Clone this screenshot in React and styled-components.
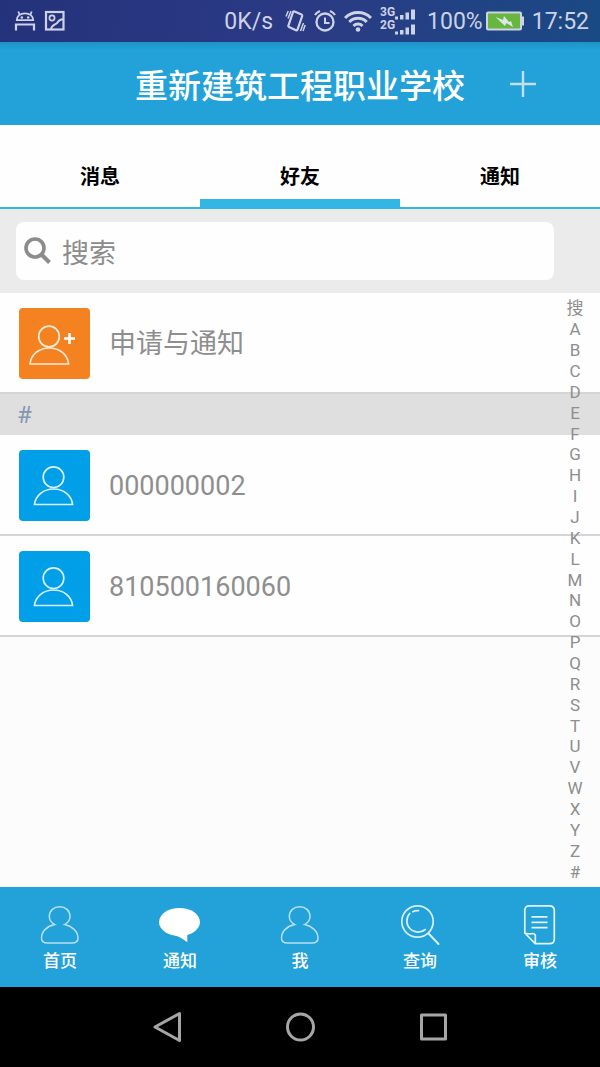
import { useState } from "react";
import styled, { createGlobalStyle } from "styled-components";

const GlobalStyle = createGlobalStyle`
  * {
    box-sizing: border-box;
  }

  body {
    margin: 0;
    background: #fcfcfc;
    font-family: Roboto, "Noto Sans CJK SC", sans-serif;
  }

  button,
  input {
    margin: 0;
    padding: 0;
    border: none;
    background: none;
    color: inherit;
    font: inherit;
  }

  svg {
    display: block;
    flex: none;
  }
`;

const Screen = styled.div`
  display: flex;
  flex-direction: column;
  min-height: 100vh;
`;

const StatusBar = styled.div`
  display: flex;
  align-items: center;
  justify-content: space-between;
  height: 42px;
  padding: 0 11px 0 14px;
  background: linear-gradient(100deg, #24327c, #2b3a84 50%, #194a84);
  color: #cdd2e6;
  font-size: 23px;
`;

const StatusGroup = styled.div`
  display: flex;
  align-items: center;
  gap: ${(props) => props.$gap}px;
`;

const Signal = styled.div`
  display: flex;
  align-items: center;
  font-size: 12px;
  font-weight: 700;
  line-height: 13px;
`;

const SignalLabels = styled.div`
  padding-bottom: 4px;
`;

const Header = styled.header`
  display: grid;
  grid-template-columns: 1fr auto 1fr;
  align-items: center;
  height: 83px;
  background: linear-gradient(#1d93c6, #22a2d8 8px);
  color: #fff;
`;

const Title = styled.h1`
  grid-column: 2;
  margin: 0;
  padding-top: 6px;
  font-size: 33px;
  font-weight: 500;
  line-height: 40px;
`;

const AddButton = styled.button`
  display: grid;
  place-items: center;
  width: 40px;
  height: 40px;
  margin-left: 38px;
  color: #c3dfec;
`;

const Tabs = styled.div`
  display: flex;
  height: 84px;
  background: #fefefe;
  border-bottom: 2px solid #33b5e5;
`;

const Tab = styled.button`
  flex: 1;
  padding-top: 30px;
  border-bottom: 8px solid
    ${(props) => (props.$active ? "#33b5e5" : "transparent")};
  color: #000;
  font-size: 20px;
  font-weight: 700;
  line-height: 24px;
`;

const SearchBar = styled.div`
  padding: 13px 46px 13px 16px;
  background: #ebebeb;
`;

const SearchBox = styled.label`
  display: flex;
  align-items: center;
  gap: 10px;
  height: 58px;
  padding: 0 8px;
  border-radius: 8px;
  background: #fefefe;
  color: #8c8c8c;
`;

const SearchInput = styled.input`
  flex: 1;
  min-width: 0;
  padding-top: 6px;
  font-size: 27px;
  line-height: 40px;
  outline: none;

  &::placeholder {
    color: #8c8c8c;
    opacity: 1;
  }
`;

const Content = styled.main`
  position: relative;
  flex: 1;
  min-height: 594px;
`;

const List = styled.ul`
  margin: 0;
  padding: 0;
  list-style: none;
`;

const Row = styled.li`
  display: flex;
  align-items: center;
  gap: 19px;
  padding: 15px 19px 13px;
  border-bottom: 2px solid #d5d5d5;
  background: #fefefe;
  color: #8e8e8e;
  font-size: 27px;
  line-height: 40px;
`;

const Avatar = styled.div`
  width: 71px;
  height: 71px;
  border-radius: 4px;
  background: ${(props) => props.$color};
`;

const GroupHeading = styled.h2`
  margin: 0;
  padding: 2px 17px 0;
  background: #dfdfdf;
  color: #8497b0;
  font-size: 24px;
  font-weight: 400;
  line-height: 39px;
`;

const LetterIndex = styled.nav`
  position: absolute;
  top: 0;
  right: 0;
  bottom: 0;
  display: flex;
  flex-direction: column;
  width: 50px;
  padding: 5px 0;
`;

const Letter = styled.button`
  flex: 1;
  min-height: 0;
  color: #8e8e8e;
  font-size: 17px;
  line-height: 20px;
`;

const BottomNav = styled.nav`
  display: flex;
  height: 100px;
  background: #22a2d8;
`;

const NavItem = styled.button`
  display: flex;
  flex: 1;
  flex-direction: column;
  align-items: center;
  gap: 4px;
  padding-top: 16px;
  color: #fff;
  font-size: 17px;
  font-weight: 500;
  line-height: 20px;
`;

const SystemNav = styled.div`
  display: flex;
  height: 80px;
  padding: 0 100px;
  background: #000;
  color: #a6a6a6;
`;

const SystemButton = styled.button`
  display: grid;
  flex: 1;
  place-items: center;
`;

const tabs = ["消息", "好友", "通知"];
const friends = ["000000002", "810500160060"];
const letters = ["搜", ..."ABCDEFGHIJKLMNOPQRSTUVWXYZ#"];

const navItems = [
  { id: "home", label: "首页", icon: <PersonIcon /> },
  { id: "notice", label: "通知", icon: <BubbleIcon /> },
  { id: "me", label: "我", icon: <PersonIcon /> },
  { id: "query", label: "查询", icon: <QueryIcon /> },
  { id: "review", label: "审核", icon: <ReviewIcon /> },
];

function App() {
  const [activeTab, setActiveTab] = useState("好友");
  const [query, setQuery] = useState("");

  return (
    <Screen>
      <GlobalStyle />
      <StatusBar>
        <StatusGroup $gap={8}>
          <AndroidIcon />
          <PictureIcon />
        </StatusGroup>
        <StatusGroup $gap={12}>
          <span>0K/s</span>
          <StatusGroup $gap={8}>
            <VibrateIcon />
            <AlarmIcon />
            <WifiIcon />
            <Signal>
              <SignalLabels>
                <div>3G</div>
                <div>2G</div>
              </SignalLabels>
              <SignalBars />
            </Signal>
          </StatusGroup>
          <StatusGroup $gap={8}>
            <StatusGroup $gap={3}>
              <span>100%</span>
              <BatteryIcon />
            </StatusGroup>
            <span>17:52</span>
          </StatusGroup>
        </StatusGroup>
      </StatusBar>

      <Header>
        <Title>重新建筑工程职业学校</Title>
        <AddButton aria-label="添加">
          <svg width="28" height="28" stroke="currentColor" strokeWidth="2.4">
            <path d="M14 1v26M1 14h26" />
          </svg>
        </AddButton>
      </Header>

      <Tabs role="tablist">
        {tabs.map((tab) => (
          <Tab
            key={tab}
            role="tab"
            aria-selected={tab === activeTab}
            $active={tab === activeTab}
            onClick={() => setActiveTab(tab)}
          >
            {tab}
          </Tab>
        ))}
      </Tabs>

      <SearchBar>
        <SearchBox>
          <SearchIcon />
          <SearchInput
            type="text"
            aria-label="搜索"
            placeholder="搜索"
            value={query}
            onChange={(e) => setQuery(e.target.value)}
          />
        </SearchBox>
      </SearchBar>

      <Content>
        <List>
          <Row>
            <Avatar $color="#f58220">
              <AddFriendIcon />
            </Avatar>
            <span>申请与通知</span>
          </Row>
        </List>
        <GroupHeading>#</GroupHeading>
        <List>
          {friends.map((friend) => (
            <Row key={friend}>
              <Avatar $color="#009fe8">
                <FriendIcon />
              </Avatar>
              <span>{friend}</span>
            </Row>
          ))}
        </List>
        <LetterIndex aria-label="索引">
          {letters.map((letter) => (
            <Letter key={letter}>{letter}</Letter>
          ))}
        </LetterIndex>
      </Content>

      <BottomNav>
        {navItems.map((item) => (
          <NavItem key={item.id}>
            {item.icon}
            <span>{item.label}</span>
          </NavItem>
        ))}
      </BottomNav>

      <SystemNav>
        <SystemButton aria-label="返回">
          <SystemIcon>
            <path d="M29.5 3.5v27L5 17z" />
          </SystemIcon>
        </SystemButton>
        <SystemButton aria-label="主屏幕">
          <SystemIcon>
            <circle cx="17.5" cy="17" r="13" />
          </SystemIcon>
        </SystemButton>
        <SystemButton aria-label="最近任务">
          <SystemIcon>
            <rect x="5.5" y="5" width="24" height="24" />
          </SystemIcon>
        </SystemButton>
      </SystemNav>
    </Screen>
  );
}

export default App;

function SystemIcon({ children }) {
  return (
    <svg
      width="34"
      height="34"
      fill="none"
      stroke="currentColor"
      strokeWidth="3"
      strokeLinejoin="round"
    >
      {children}
    </svg>
  );
}

function AndroidIcon() {
  return (
    <svg width="22" height="22" fill="none" stroke="currentColor">
      <path
        d="M2.8 10.2C2.8 6 6.3 3.3 11 3.3s8.200 2.700 8.200 6.900z"
        strokeWidth="1.800"
      />
      <path d="M5.500 4.500 4.300 1.500M16.500 4.500 17.700 1.500" strokeWidth="1.800" />
      <path d="M2 20.500v-6h18v6" strokeWidth="2.200" />
      <circle cx="7.800" cy="7.500" r="1.300" fill="currentColor" stroke="none" />
      <circle cx="14.200" cy="7.500" r="1.300" fill="currentColor" stroke="none" />
    </svg>
  );
}

function PictureIcon() {
  return (
    <svg width="22" height="22" fill="none" stroke="currentColor">
      <rect x="2" y="2" width="17.5" height="17.5" strokeWidth="2.2" />
      <circle cx="8" cy="8" r="2.600" strokeWidth="1.700" />
      <path d="M7 19C8 14 12 15 13.500 12.500S16 9.500 19 9.300" strokeWidth="2" />
    </svg>
  );
}

function VibrateIcon() {
  return (
    <svg width="21" height="24" fill="none" stroke="currentColor">
      <path
        d="M9.500 2.500 16.500 5.500q1 .5.700 1.500L12.500 20.500q-.5 1.200-1.500.7L4 18q-1-.5-.6-1.500L8 3.200q.4-1 1.500-.7z"
        strokeWidth="2.200"
      />
      <path
        d="M3 9.500 6 2M1 7.500 3.200 2M15.500 22l3-8M18 22l2.200-6"
        strokeWidth="1.500"
      />
    </svg>
  );
}

function AlarmIcon() {
  return (
    <svg width="22" height="24" fill="none" stroke="currentColor">
      <circle cx="11" cy="13" r="8.500" strokeWidth="2.300" />
      <path d="M11 8.500V14h4.500" strokeWidth="2" />
      <path d="M1 6Q2.500 3.500 6 2M21 6Q19.500 3.500 16 2" strokeWidth="2.200" />
    </svg>
  );
}

function WifiIcon() {
  return (
    <svg width="28" height="22" fill="none" stroke="currentColor">
      <path
        d="M1 8a18 18 0 0 1 26 0M5.300 12a12 12 0 0 1 17.400 0M9.500 16a6.200 6.200 0 0 1 9 0"
        strokeWidth="3"
      />
      <circle cx="14" cy="19.500" r="2.300" fill="currentColor" stroke="none" />
    </svg>
  );
}

function SignalBars() {
  return (
    <svg width="20" height="27" fill="currentColor">
      <path d="M0 8.500h3v3H0zM5 7h3.500v4.500H5zM10.500 4.500H14v7h-3.500zM16 1.500h4v10h-4z" />
      <path d="M0 23.500h3v3H0zM5 22h3.500v4.500H5zM10.500 19.500H14v7h-3.500zM16 16.500h4v10h-4z" />
    </svg>
  );
}

function BatteryIcon() {
  return (
    <svg width="38" height="20">
      <rect
        x="1"
        y="1.5"
        width="34"
        height="17"
        rx="1"
        fill="#67b73e"
        stroke="#cdd2e6"
        strokeWidth="2"
      />
      <path d="M36 5.500h2v9h-2z" fill="#cdd2e6" />
      <path d="M9.500 6 17 9l1-4 5 6 2-1 2 6-6.500-4-1.500 3z" fill="#dfe5ea" />
    </svg>
  );
}

function SearchIcon() {
  return (
    <svg width="28" height="28" fill="none" stroke="currentColor">
      <circle cx="11" cy="11" r="9" strokeWidth="3.600" />
      <path d="m17.500 17.500 8 8" strokeWidth="4" />
    </svg>
  );
}

function AddFriendIcon() {
  return (
    <svg width="71" height="71" fill="none" stroke="#fdebd9">
      <circle cx="30" cy="28.500" r="10.300" strokeWidth="1.700" />
      <path
        d="M11 56C12 46.500 20 40 30.300 40S48.600 46.500 49.600 56z"
        strokeWidth="1.700"
      />
      <path d="M50.500 25v11M45 30.500h11" stroke="#fff" strokeWidth="2.600" />
    </svg>
  );
}

function FriendIcon() {
  return (
    <svg width="71" height="71" fill="none" stroke="#d9f1fc" strokeWidth="1.700">
      <circle cx="34.500" cy="27.200" r="10.300" />
      <path d="M15.500 54.500C16.500 45.500 24.500 39 34.600 39S52.600 45.500 53.600 54.500z" />
    </svg>
  );
}

function PersonIcon() {
  return (
    <svg width="44" height="44" fill="none" stroke="#b9e0f2" strokeWidth="1.500">
      <path d="M16.800 21.600C13 19.500 11.300 16.500 11.300 13.500 11.300 7.500 16 3.700 21.700 3.700S32 7.500 32 13.500C32 16.500 30.300 19.500 26.600 21.600 34 23 40 28.500 40 35 40 38.500 38 40 34 40H9.500C5.500 40 3.500 38.500 3.500 35 3.500 28.500 9 23 16.800 21.600z" />
    </svg>
  );
}

function BubbleIcon() {
  return (
    <svg width="44" height="44" fill="#fff">
      <ellipse cx="21.500" cy="19" rx="20.500" ry="14" />
      <path d="M17 32.500C21 33.500 25 36 29.300 39.200V31z" />
    </svg>
  );
}

function QueryIcon() {
  return (
    <svg
      width="44"
      height="44"
      fill="none"
      stroke="#d8eff9"
      strokeWidth="1.700"
      strokeLinecap="round"
    >
      <circle cx="19.500" cy="18.500" r="15.700" />
      <path d="M11.700 10.500a11.200 11.200 0 0 0 15.600 16M14.800 8.700q2.800-1.200 5.700-1" />
      <path d="m30.500 30.500 10 10.500" strokeWidth="2" />
    </svg>
  );
}

function ReviewIcon() {
  return (
    <svg
      width="44"
      height="44"
      fill="none"
      stroke="#e4f4fb"
      strokeWidth="1.700"
      strokeLinejoin="round"
    >
      <path d="M6.800 30V7.500Q6.800 2.800 11.500 2.800H31.500Q36.300 2.800 36.300 7.500V36Q36.300 40.700 31.500 40.700H17.200z" />
      <path d="M6.800 30Q12 31.500 14.500 30.500 18 31 17.300 34V40.700" />
      <path d="M13.500 13.800h16M13.500 19.300h16M13.500 24.700h16" />
    </svg>
  );
}
